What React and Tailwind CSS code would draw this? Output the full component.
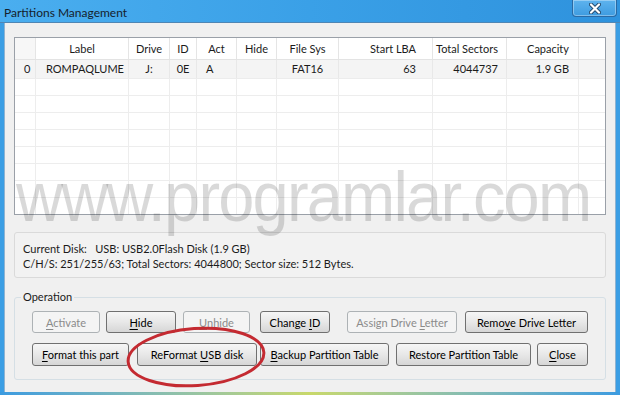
import React from 'react';

const cols = [
  { w: 21, h: '', align: 'text-left pl-[9px]' },
  { w: 93, h: 'Label', align: 'text-left pl-[10px]', hAlign: 'text-center' },
  { w: 41, h: 'Drive', align: 'text-center', hAlign: 'text-center' },
  { w: 27, h: 'ID', align: 'text-center', hAlign: 'text-center' },
  { w: 40, h: 'Act', align: 'text-left pl-[9px]', hAlign: 'text-center' },
  { w: 40, h: 'Hide', align: 'text-center', hAlign: 'text-center' },
  { w: 62, h: 'File Sys', align: 'text-center', hAlign: 'text-center' },
  { w: 94, h: 'Start LBA', align: 'text-right pr-[16px]', hAlign: 'text-right pr-[16px]' },
  { w: 74, h: 'Total Sectors', align: 'text-right pr-[8px]', hAlign: 'text-right pr-[8px]' },
  { w: 72, h: 'Capacity', align: 'text-right pr-[9px]', hAlign: 'text-right pr-[9px]' },
];

const row = ['0', 'ROMPAQLUME', 'J:', '0E', 'A', '', 'FAT16', '63', '4044737', '1.9 GB'];

function Btn({ w, ml, label, u, disabled }) {
  const parts =
    u === undefined ? [label] : [label.slice(0, u), label[u], label.slice(u + 1)];
  return (
    <div
      style={{ width: w, marginLeft: ml }}
      className={`shrink-0 h-full flex items-center justify-center rounded-[3px] border text-[11px] leading-none ${
        disabled
          ? 'border-[#adb2b5] bg-[#f4f4f4] text-[#8b8b8b]'
          : 'border-[#707070] bg-linear-to-b from-[#f6f6f6] via-[#e8e8e8] to-[#d6d6d6] text-black'
      }`}
    >
      {u === undefined ? (
        label
      ) : (
        <span>
          {parts[0]}
          <span className="underline underline-offset-[2px]">{parts[1]}</span>
          {parts[2]}
        </span>
      )}
    </div>
  );
}

export default function App() {
  return (
    <div className="relative w-[620px] h-[395px] overflow-hidden bg-[#3b9ee4] font-['Lato',sans-serif] text-[11px] text-[#1b1b1b]">
      {/* title bar */}
      <div className="h-[23px] flex items-start justify-between bg-linear-to-r from-[#4aaeef] via-[#3aa0e7] to-[#2e92dd] border-b border-[#4f86b4]">
        <div className="pl-[4px] pt-[4px] text-[12px] text-[#15212c]">Partitions Management</div>
        <div className="mr-[3px] w-[45px] h-[17px] rounded-b-[4px] border border-t-0 border-[#2a6aa4] bg-linear-to-b from-[#5eb3ee] to-[#3d9be0] flex items-center justify-center shadow-[inset_0_0_0_1px_rgba(255,255,255,0.35)]">
          <svg width="12" height="11" viewBox="0 0 12 11">
            <path d="M2 1.5 L10 9.5 M10 1.5 L2 9.5" stroke="#234a6e" strokeWidth="4" strokeLinecap="round" />
            <path d="M2 1.5 L10 9.5 M10 1.5 L2 9.5" stroke="#ffffff" strokeWidth="2.2" strokeLinecap="round" />
          </svg>
        </div>
      </div>

      {/* client area */}
      <div className="mx-[4px] h-[369px] bg-[#f0f0f0] border-x border-[#8fb3d1] pl-[9px] pr-[9px] pt-[14px] flex flex-col">
        {/* list view */}
        <div className="h-[178px] border border-[#9aa0a8] bg-white overflow-hidden">
          <div className="flex h-[22px] border-b border-[#e3e3e3]">
            {cols.map((c, i) => (
              <div
                key={i}
                style={{ width: c.w }}
                className={`shrink-0 border-r border-[#e5e5e5] leading-[21px] ${i === 0 ? 'bg-[#f7f7f7]' : ''} ${c.hAlign || ''}`}
              >
                {c.h}
              </div>
            ))}
            <div className="flex-1" />
          </div>
          <div className="flex h-[19px] border-b border-[#ececec] bg-[#f4f4f4]">
            {cols.map((c, i) => (
              <div
                key={i}
                style={{ width: c.w }}
                className={`shrink-0 border-r border-[#e8e8e8] leading-[18px] ${c.align}`}
              >
                {row[i]}
              </div>
            ))}
            <div className="flex-1" />
          </div>
          {Array.from({ length: 8 }).map((_, r) => (
            <div key={r} className="flex h-[17px] border-b border-[#ededed]">
              {cols.map((c, i) => (
                <div key={i} style={{ width: c.w }} className="shrink-0 border-r border-[#ededed]" />
              ))}
              <div className="flex-1" />
            </div>
          ))}
        </div>

        {/* disk info */}
        <div className="mt-[17px] h-[46px] rounded-[3px] border border-[#dadada] bg-[#f2f2f2] pl-[8px] pt-[8px] leading-[15px]">
          <div>Current Disk:&nbsp;&nbsp;&nbsp;USB: USB2.0Flash Disk (1.9 GB)</div>
          <div>C/H/S: 251/255/63; Total Sectors: 4044800; Sector size: 512 Bytes.</div>
        </div>

        {/* operation group */}
        <fieldset className="mt-[11px] border border-[#d5dfe5] rounded-[3px] pl-[17px] pt-[6px] pb-[13px]">
          <legend className="ml-[-11px] px-[2px] leading-[16px]">Operation</legend>
          <div className="flex h-[22px]">
            <Btn w={68} ml={0} label="Activate" u={0} disabled />
            <Btn w={70} ml={6} label="Hide" u={0} />
            <Btn w={67} ml={7} label="Unhide" u={0} disabled />
            <Btn w={70} ml={10} label="Change ID" u={7} />
            <Btn w={110} ml={17} label="Assign Drive Letter" u={13} disabled />
            <Btn w={123} ml={8} label="Remove Drive Letter" u={4} />
          </div>
          <div className="flex h-[23px] mt-[10px]">
            <Btn w={97} ml={0} label="Format this part" u={0} />
            <Btn w={120} ml={8} label="ReFormat USB disk" u={9} />
            <Btn w={129} ml={3} label="Backup Partition Table" u={0} />
            <Btn w={135} ml={7} label="Restore Partition Table" />
            <Btn w={51} ml={6} label="Close" u={0} />
          </div>
        </fieldset>
      </div>

      {/* bottom frame */}
      <div className="h-[3px] bg-linear-to-r from-[#3c9be0] via-[#c8d86a] to-[#3c9be0]" />

      {/* watermark */}
      <div className="pointer-events-none absolute left-[16px] top-[162px] origin-top-left [transform:scaleX(0.93)] text-[70px] leading-[70px] tracking-[-2px] text-black/15 font-['Liberation_Sans',sans-serif] whitespace-nowrap">
        www.programlar.com
      </div>

      {/* red marker ellipse */}
      <svg className="pointer-events-none absolute left-[124px] top-[324px]" width="144" height="66" viewBox="0 0 144 66">
        <ellipse cx="72" cy="33" rx="68" ry="28.5" fill="none" stroke="#c42a31" strokeWidth="3" transform="rotate(-4 72 33)" />
      </svg>
    </div>
  );
}
